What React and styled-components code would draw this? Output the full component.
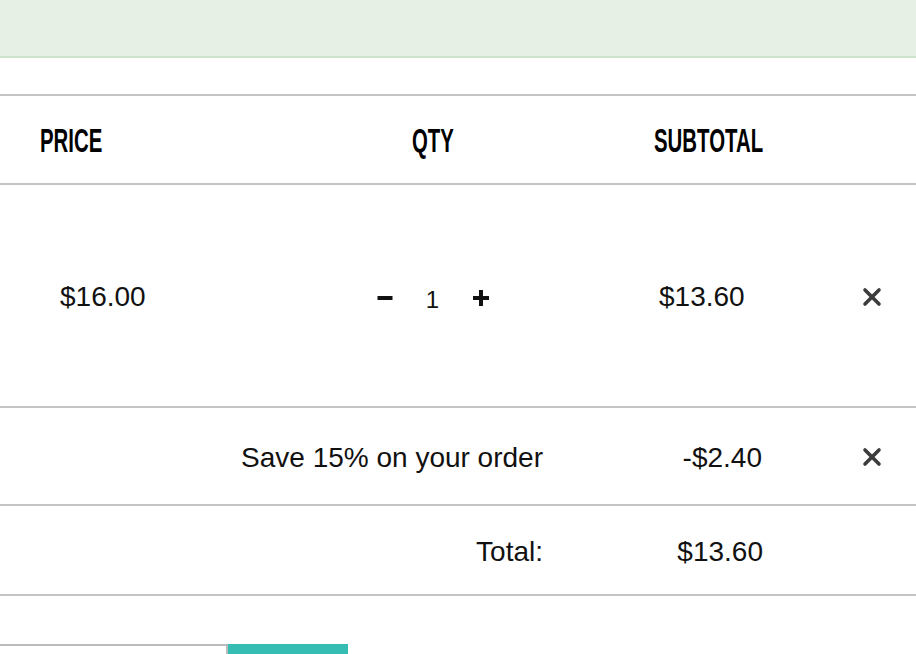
import React from "react";
import styled, { createGlobalStyle } from "styled-components";

const Global = createGlobalStyle`
  html, body { margin: 0; padding: 0; background: #fff; }
  body { font-family: "Liberation Sans", Arial, sans-serif; color: #111; overflow: hidden; }
  * { box-sizing: border-box; }
`;

const Page = styled.div`
  width: 916px;
  height: 654px;
  overflow: hidden;
  display: flex;
  flex-direction: column;
`;

const Banner = styled.div`
  height: 58px;
  background: #e6f0e5;
  border-bottom: 2px solid #cde3cc;
  flex: none;
`;

const Table = styled.div`
  margin-top: 36px;
  border-top: 2px solid #c4c4c4;
  display: flex;
  flex-direction: column;
`;

const Row = styled.div`
  display: grid;
  grid-template-columns: 320px 225px 239px 1fr;
  align-items: center;
  height: ${(p) => p.$h}px;
  border-bottom: 2px solid #c4c4c4;
  font-size: 28px;
`;

const HeadCell = styled.div`
  padding-left: ${(p) => p.$pl || 0}px;
  text-align: ${(p) => p.$align || "left"};
`;

const HeadLabel = styled.span`
  display: inline-block;
  font-weight: 700;
  font-size: 34px;
  color: #000;
  transform: scaleX(0.6);
  transform-origin: ${(p) => (p.$center ? "center" : "left")} center;
  margin-top: 1px;
`;

const Cell = styled.div`
  padding-left: ${(p) => p.$pl || 0}px;
  padding-right: ${(p) => p.$pr || 0}px;
  padding-top: 3px;
  text-align: ${(p) => p.$align || "left"};
  grid-column: ${(p) => p.$span || "auto"};
  white-space: nowrap;
`;

const Qty = styled.div`
  display: flex;
  align-items: center;
  justify-content: center;
  padding-top: 4px;
`;

const QtyBtn = styled.button`
  border: none;
  background: none;
  padding: 0;
  width: 18px;
  height: 18px;
  display: flex;
  align-items: center;
  justify-content: center;
  color: #111;
  cursor: pointer;
`;

const QtyValue = styled.span`
  font-size: 24px;
  width: 78px;
  text-align: center;
  margin-top: 4px;
`;

const RemoveCell = styled.div`
  display: flex;
  justify-content: flex-end;
  padding-right: 34px;
  padding-top: 2px;
`;

const Remove = styled.button`
  border: none;
  background: none;
  padding: 0;
  width: 20px;
  height: 20px;
  display: flex;
  color: #3c3c3c;
  cursor: pointer;
`;

const Coupon = styled.div`
  margin-top: 48px;
  display: flex;
  height: 40px;
`;

const CouponInput = styled.div`
  width: 228px;
  border-top: 2px solid #bbb;
  border-right: 2px solid #bbb;
`;

const ApplyBtn = styled.div`
  width: 120px;
  background: #36bdb3;
`;

const XIcon = () => (
  <svg width="20" height="20" viewBox="0 0 20 20">
    <path d="M3 3 L17 17 M17 3 L3 17" stroke="currentColor" strokeWidth="3.6" strokeLinecap="round" />
  </svg>
);

const Minus = () => (
  <svg width="16" height="16" viewBox="0 0 16 16">
    <rect x="0.5" y="6" width="15" height="4" fill="currentColor" />
  </svg>
);

const Plus = () => (
  <svg width="18" height="18" viewBox="0 0 18 18">
    <rect x="1" y="7" width="16" height="4" fill="currentColor" />
    <rect x="7" y="1" width="4" height="16" fill="currentColor" />
  </svg>
);

export default function App() {
  return (
    <Page>
      <Global />
      <Banner />
      <Table>
        <Row $h={89}>
          <HeadCell $pl={40}><HeadLabel>PRICE</HeadLabel></HeadCell>
          <HeadCell $align="center"><HeadLabel $center>QTY</HeadLabel></HeadCell>
          <HeadCell $pl={109}><HeadLabel>SUBTOTAL</HeadLabel></HeadCell>
          <div />
        </Row>
        <Row $h={223}>
          <Cell $pl={60}>$16.00</Cell>
          <Qty>
            <QtyBtn aria-label="decrease"><Minus /></QtyBtn>
            <QtyValue>1</QtyValue>
            <QtyBtn aria-label="increase"><Plus /></QtyBtn>
          </Qty>
          <Cell $pl={114}>$13.60</Cell>
          <RemoveCell><Remove aria-label="remove"><XIcon /></Remove></RemoveCell>
        </Row>
        <Row $h={98}>
          <Cell $span="1 / 3" $align="right" $pr={2}>Save 15% on your order</Cell>
          <Cell $align="right" $pr={22}>-$2.40</Cell>
          <RemoveCell><Remove aria-label="remove discount"><XIcon /></Remove></RemoveCell>
        </Row>
        <Row $h={90}>
          <Cell $span="1 / 3" $align="right" $pr={2}>Total:</Cell>
          <Cell $align="right" $pr={21}>$13.60</Cell>
          <div />
        </Row>
      </Table>
      <Coupon>
        <CouponInput />
        <ApplyBtn />
      </Coupon>
    </Page>
  );
}
